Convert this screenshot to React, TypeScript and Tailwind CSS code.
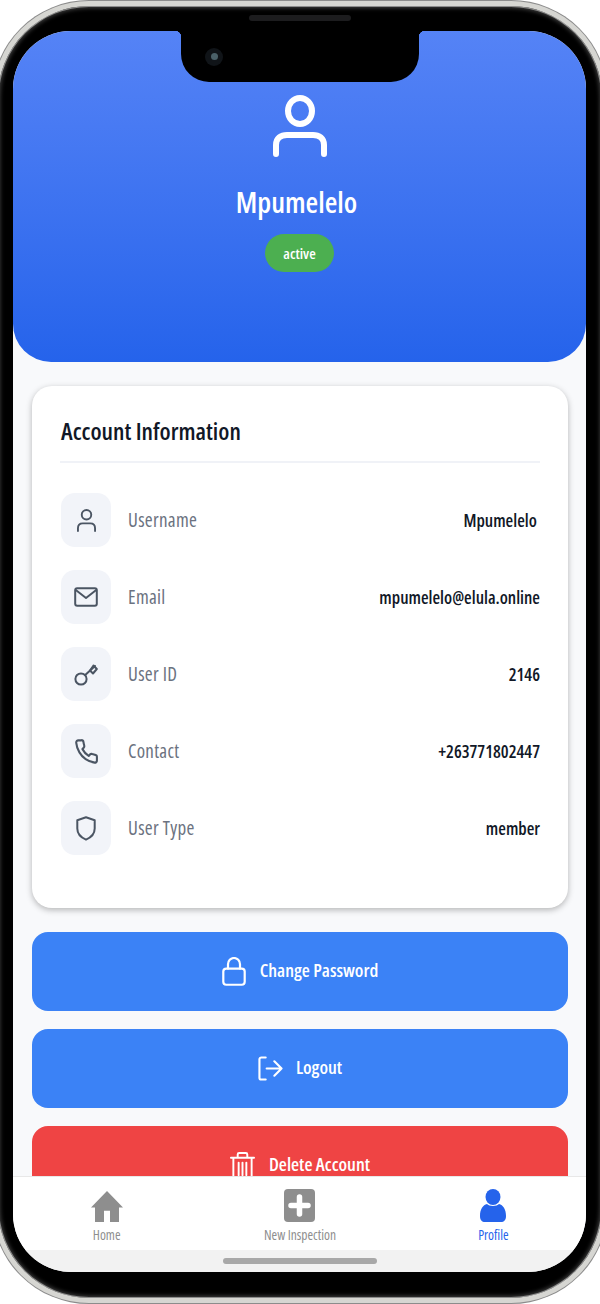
import React from "react";

type IconProps = { className?: string };

const Stretch = ({ box, className, children, sw = 2 }: { box: string; className?: string; children: React.ReactNode; sw?: number }) => (
  <svg viewBox={box} preserveAspectRatio="none" fill="none" stroke="currentColor" strokeWidth={sw} strokeLinecap="round" strokeLinejoin="round" className={className}>
    {children}
  </svg>
);

const UserIcon = ({ className }: IconProps) => (
  <Stretch box="0 0 54 63" sw={6} className={className}>
    <ellipse cx="27" cy="16" rx="12" ry="13" />
    <path d="M3 59V50C3 43 8 40 14 40H40C46 40 51 43 51 50V59" />
  </Stretch>
);
const SmallUser = ({ className }: IconProps) => (
  <Stretch box="0 0 20 24" className={className}>
    <ellipse cx="10" cy="6" rx="5" ry="5" />
    <path d="M1 23V20C1 17 3 15 6 15H14C17 15 19 17 19 20V23" />
  </Stretch>
);
const MailIcon = ({ className }: IconProps) => (
  <Stretch box="0 0 24 20" className={className}>
    <rect x="1.2" y="1.2" width="21.6" height="17.6" rx="2" />
    <path d="M1.8 3 12 11 22.2 3" />
  </Stretch>
);
const KeyIcon = ({ className }: IconProps) => (
  <Stretch box="0 0 24 24" className={className}>
    <circle cx="7" cy="17" r="5.600" />
    <path d="M11.200 13 21 4" />
    <path d="M16 8.500 19 11.500 22.800 7 19.500 3.500Z" />
  </Stretch>
);
const PhoneIcon = ({ className }: IconProps) => (
  <Stretch box="0 0 24 24" className={className}>
    <path d="M22 16.900v3a2 2 0 0 1-2.200 2 19.800 19.800 0 0 1-8.600-3.100 19.500 19.500 0 0 1-6-6 19.800 19.800 0 0 1-3.100-8.700A2 2 0 0 1 4.100 2h3a2 2 0 0 1 2 1.700c.1 1 .4 1.900.7 2.800a2 2 0 0 1-.5 2.100L8.100 9.900a16 16 0 0 0 6 6l1.300-1.300a2 2 0 0 1 2.100-.4c.9.3 1.800.6 2.800.7a2 2 0 0 1 1.700 2z" />
  </Stretch>
);
const ShieldIcon = ({ className }: IconProps) => (
  <Stretch box="0 0 20 24" className={className}>
    <path d="M10 1.300 18.700 4v8c0 5-3.600 8.600-8.700 10.700C4.900 20.600 1.300 17 1.300 12V4z" />
  </Stretch>
);
const LockIcon = ({ className }: IconProps) => (
  <Stretch box="0 0 24 30" sw={2.2} className={className}>
    <rect x="1.300" y="12" width="21.400" height="16.700" rx="3" />
    <path d="M6 12V7.500a6 6.500 0 0 1 12 0V12" />
  </Stretch>
);
const LogoutIcon = ({ className }: IconProps) => (
  <Stretch box="0 0 26 26" sw={2.2} className={className}>
    <path d="M8 1.500H3.500A2 2 0 0 0 1.500 3.500V22.500A2 2 0 0 0 3.500 24.500H8M9 13H24.500M17 5.500 24.500 13 17 20.500" />
  </Stretch>
);
const TrashIcon = ({ className }: IconProps) => (
  <Stretch box="0 0 26 28" className={className}>
    <path d="M1 6H25M8 6V2.500A1.500 1.500 0 0 1 9.500 1H16.500A1.500 1.500 0 0 1 18 2.500V6M3.500 6V28M22.500 6V28M9 11V24M13 11V24M17 11V24" />
  </Stretch>
);

const rows = [
  { icon: <SmallUser className="w-[19px] h-[23px]" />, label: "Username", value: "Mpumelelo\u00a0" },
  { icon: <MailIcon className="w-[24px] h-[20px]" />, label: "Email", value: "mpumelelo@elula.online" },
  { icon: <KeyIcon className="w-[24px] h-[24px]" />, label: "User ID", value: "2146" },
  { icon: <PhoneIcon className="w-[25px] h-[27px]" />, label: "Contact", value: "+263771802447" },
  { icon: <ShieldIcon className="w-[20px] h-[25px]" />, label: "User Type", value: "member" },
];

const App = () => (
  <div className="w-[600px] h-[1304px] overflow-hidden bg-white font-['Open_Sans',sans-serif] [font-stretch:75%]">
    <div className="relative -mx-[7px] mt-[1px] h-[1302px] rounded-[96px] border-[5px] border-[#d6d6d2] bg-black pl-[15px] pr-[16px] pt-[25px] shadow-[0_0_0_1px_#8c8c8c,inset_0_0_0_1px_#8c8c8c,inset_0_0_4px_2px_#444]">
      <div className="absolute left-[251px] top-[9px] h-[6px] w-[102px] rounded-full bg-[#1c1c1e]" />
      <div className="relative flex h-[1241px] flex-col overflow-hidden rounded-[58px] bg-[#f8f9fb]">
        {/* notch */}
        <div className="absolute left-[162px] top-0 size-[6px] bg-[radial-gradient(circle_at_0_100%,transparent_6px,black_6.500px)]" />
        <div className="absolute left-[406px] top-0 size-[6px] bg-[radial-gradient(circle_at_100%_100%,transparent_6px,black_6.500px)]" />
        <div className="absolute left-[168px] top-0 flex h-[51px] w-[238px] items-center rounded-b-[28px] bg-black pl-[24px]">
          <div className="flex size-[18px] items-center justify-center rounded-full bg-[#101418]">
            <div className="size-[7px] rounded-full bg-[#4a6068]" />
          </div>
        </div>

        <header className="flex h-[331px] shrink-0 flex-col items-center rounded-b-[38px] bg-gradient-to-b from-[#5583f6] to-[#2563eb] pt-[64px] text-white">
          <UserIcon className="h-[63px] w-[54px]" />
          <h1 className="mt-[26px] pr-[6px] text-[29px] font-semibold leading-[36px]">Mpumelelo</h1>
          <div className="mt-[14px] flex h-[38px] w-[69px] items-center justify-center rounded-full bg-[#4caf50] text-[15px] font-semibold">active</div>
        </header>

        <main className="min-h-0 flex-1 overflow-hidden pl-[19px] pr-[18px] pt-[24px]">
          <section className="h-[522px] rounded-[20px] bg-white px-[28px] pt-[29px] shadow-[0_2px_6px_rgba(0,0,0,0.28)]">
            <h2 className="border-b-2 border-[#f0f2f7] pb-[14px] pl-[1px] text-[24px] font-semibold leading-[32px] text-[#111827]">Account Information</h2>
            <div className="mt-[30px] flex flex-col gap-[23px] pl-[1px]">
              {rows.map((r) => (
                <div key={r.label} className="flex h-[54px] items-center">
                  <div className="flex h-[54px] w-[50px] items-center justify-center rounded-[14px] bg-[#f2f4f9] text-[#4b5563]">{r.icon}</div>
                  <span className="ml-[17px] text-[19px] tracking-[0.3px] text-[#6b7280]">{r.label}</span>
                  <span className="ml-auto text-[17.5px] font-semibold text-[#111827]">{r.value}</span>
                </div>
              ))}
            </div>
          </section>

          <div className="mt-[24px] flex flex-col gap-[18px] text-[18.5px] font-semibold text-white">
            <button className="flex h-[79px] items-center justify-center gap-[14px] rounded-[16px] bg-[#3b82f6]">
              <LockIcon className="h-[29px] w-[24px]" />
              <span className="-mt-[4px] leading-[22px]">Change Password</span>
            </button>
            <button className="flex h-[79px] items-center justify-center gap-[13px] rounded-[16px] bg-[#3b82f6]">
              <LogoutIcon className="h-[25px] w-[25px]" />
              <span className="-mt-[4px] leading-[22px]">Logout</span>
            </button>
            <button className="flex h-[79px] items-center justify-center gap-[14px] rounded-[16px] bg-[#ef4444]">
              <TrashIcon className="h-[27px] w-[25px]" />
              <span className="-mt-[4px] leading-[22px]">Delete Account</span>
            </button>
          </div>
        </main>

        <nav className="h-[74px] shrink-0 overflow-hidden border-t border-[#e8e8e8] bg-white pt-[12px] text-[13.5px]">
          <div className="-ml-[3px] grid w-[580px] grid-cols-3">
            <div className="flex flex-col items-center text-[#8e8e8e]">
              <svg viewBox="0 0 32 30" preserveAspectRatio="none" className="mt-[2px] h-[31px] w-[32px] fill-current">
                <path d="M16 0 32 16H28V30H19V19H13V30H4V16H0Z" />
              </svg>
              <span className="mt-[6px] leading-[14px]">Home</span>
            </div>
            <div className="flex flex-col items-center text-[#8e8e8e]">
              <svg viewBox="0 0 31 33" preserveAspectRatio="none" className="h-[33px] w-[31px]">
                <rect width="31" height="33" rx="4" fill="currentColor" />
                <path d="M15.500 8V25M7 16.500H24" stroke="#fff" strokeWidth="5.500" strokeLinecap="round" />
              </svg>
              <span className="mt-[6px] leading-[14px]">New Inspection</span>
            </div>
            <div className="flex flex-col items-center text-[#2563eb]">
              <svg viewBox="0 0 26 33" preserveAspectRatio="none" className="h-[33px] w-[26px] fill-current">
                <ellipse cx="13" cy="8" rx="7.500" ry="8" />
                <path d="M0 27C0 20 3 16 7 15 9 17.500 17 17.500 19 15 23 16 26 20 26 27 26 31 24 33 21 33H5C2 33 0 31 0 27Z" />
              </svg>
              <span className="mt-[6px] leading-[14px]">Profile</span>
            </div>
          </div>
        </nav>
        <div className="flex h-[22px] shrink-0 items-center justify-center bg-[#f2f2f2]">
          <div className="h-[6px] w-[154px] rounded-full bg-[#a8a8a8]" />
        </div>
      </div>
    </div>
  </div>
);

export default App;
